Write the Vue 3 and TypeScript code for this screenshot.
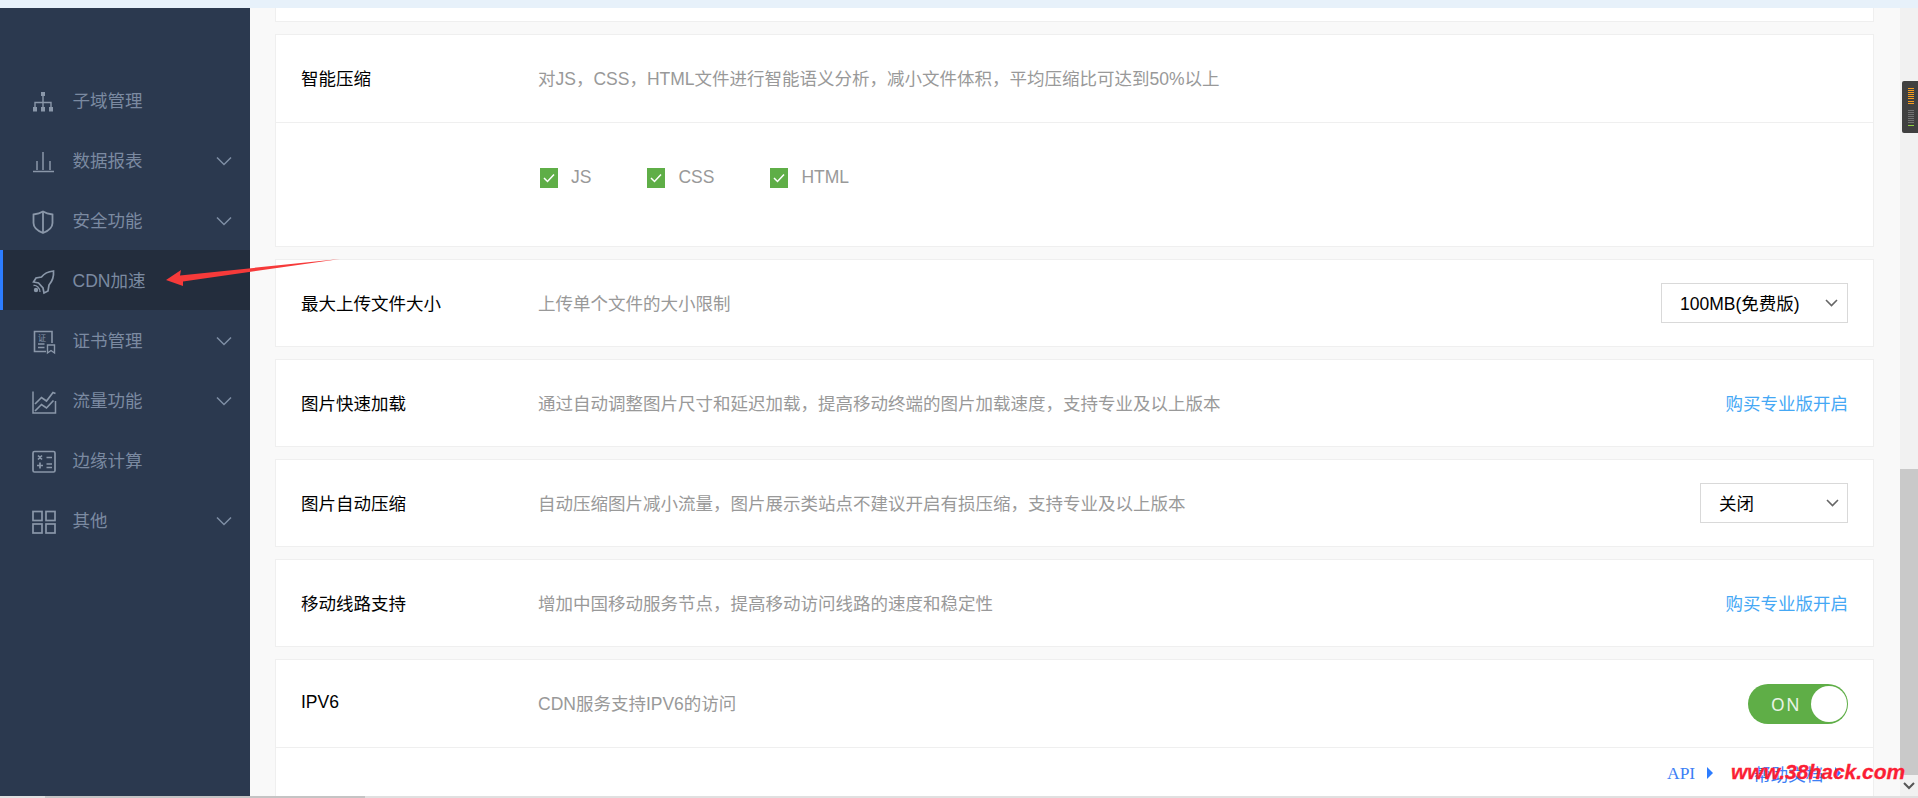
<script setup lang="ts">
interface NavItem { key: string; label: string; chevron: boolean; active?: boolean }
const nav: NavItem[] = [
  { key: 'sub', label: '子域管理', chevron: false },
  { key: 'report', label: '数据报表', chevron: true },
  { key: 'safe', label: '安全功能', chevron: true },
  { key: 'cdn', label: 'CDN加速', chevron: false, active: true },
  { key: 'cert', label: '证书管理', chevron: true },
  { key: 'flow', label: '流量功能', chevron: true },
  { key: 'edge', label: '边缘计算', chevron: false },
  { key: 'other', label: '其他', chevron: true },
]
const checks = ['JS', 'CSS', 'HTML']
const orange = Array.from({ length: 8 }, (_, i) => i)
const grey = Array.from({ length: 7 }, (_, i) => i)
</script>

<template>
  <div class="page">
    <div class="topbar"></div>
    <div class="body">
      <aside class="sidebar">
        <div v-for="item in nav" :key="item.key" class="nav" :class="{ active: item.active }">
          <span class="nav-icon">
            <svg width="24" height="24" viewBox="0 0 24 24" fill="none" stroke="#8a97a9" stroke-width="1.4">
              <template v-if="item.key === 'sub'">
                <path d="M11 5v6M3 17v-4.500h16V17M11 11v6" />
                <rect x="9" y="2" width="4" height="4" fill="#8a97a9" stroke="none" />
                <rect x="1" y="17" width="4" height="4.500" fill="#8a97a9" stroke="none" />
                <rect x="9" y="17" width="4" height="4.500" fill="#8a97a9" stroke="none" />
                <rect x="17" y="17" width="4" height="4.500" fill="#8a97a9" stroke="none" />
              </template>
              <template v-else-if="item.key === 'report'">
                <path d="M1 21.500h21M5 20V11M11 20V2M18 20V11" stroke-width="1.500" />
              </template>
              <template v-else-if="item.key === 'safe'">
                <path d="M1.500 4.500C5 4 8.500 3 11 1.500 13.500 3 17 4 20.500 4.500V13C20.500 18 16 21 11 23 6 21 1.500 18 1.500 13z" stroke-width="1.800" />
                <path d="M11 2v20.500" stroke-width="1.800" />
              </template>
              <template v-else-if="item.key === 'cdn'">
                <path d="M21.500 1c.5 6-1 10-4.500 14l-1 6-4 2-1-5-4.500-5-5-1 2.500-4 5.500-1C12.500 3 17 1.500 21.500 1z" stroke-width="1.700" />
                <circle cx="4" cy="20" r="2.200" fill="#8a97a9" stroke="none" />
                <path d="M1.500 15.500c3-.5 6.500 2.500 6.500 6.500" stroke-width="1.300" />
              </template>
              <template v-else-if="item.key === 'cert'">
                <path d="M20 13V1.500H2.500v20H14" stroke-width="1.600" />
                <text x="6" y="10.500" font-size="8" fill="#8a97a9" stroke="none" class="mini">证</text>
                <path d="M6 14h6.500M6 17.500h6.500" stroke-width="1.400" />
                <path d="M15.500 15h7v8l-3.500-2.500-3.500 2.500z" stroke-width="1.400" />
              </template>
              <template v-else-if="item.key === 'flow'">
                <path d="M1 1.500v21.500h22.500V11" stroke-width="1.500" />
                <path d="M3 14l6.500-6.500 5 3.500 6.500-8.500 2.500 1M3 21l6.500-6.500 5 3.500 7-7.500" stroke-width="1.700" />
              </template>
              <template v-else-if="item.key === 'edge'">
                <rect x="1" y="1.500" width="22" height="20.500" rx="1.500" stroke-width="1.700" />
                <path d="M6 5.500l4 4M10 5.500l-4 4M14.500 7.500h5.500M5 15.500h6M8 12.500v6M14.500 14h5.500M14.500 17.500h5.500" stroke-width="1.700" />
              </template>
              <template v-else>
                <rect x="1" y="1.500" width="9" height="9" stroke-width="1.700" />
                <rect x="14" y="1.500" width="9" height="9" stroke-width="1.700" />
                <rect x="1" y="14" width="9" height="9" stroke-width="1.700" />
                <rect x="14" y="14" width="9" height="9" stroke-width="1.700" />
              </template>
            </svg>
          </span>
          <span class="nav-label">{{ item.label }}</span>
          <svg v-if="item.chevron" class="nav-chev" width="16" height="10" viewBox="0 0 16 10" fill="none" stroke="#7f8ea5" stroke-width="1.500">
            <path d="M1 1.500l7 7 7-7" />
          </svg>
        </div>
      </aside>

      <main class="main">
        <section class="card stub"></section>

        <section class="card">
          <div class="row head">
            <div class="label">智能压缩</div>
            <div class="desc">对JS，CSS，HTML文件进行智能语义分析，减小文件体积，平均压缩比可达到50%以上</div>
          </div>
          <div class="row checks-row">
            <div class="checks">
              <label v-for="c in checks" :key="c" class="check">
                <span class="box">
                  <svg width="12" height="10" viewBox="0 0 12 10" fill="none" stroke="#fff" stroke-width="1.500"><path d="M1 5l3.500 3.500L11 1.500" /></svg>
                </span>
                <span>{{ c }}</span>
              </label>
            </div>
          </div>
        </section>

        <section class="card">
          <div class="row">
            <div class="label">最大上传文件大小</div>
            <div class="desc">上传单个文件的大小限制</div>
            <div class="select wide">
              <span>100MB(免费版)</span>
              <svg width="13" height="8" viewBox="0 0 13 8" fill="none" stroke="#666" stroke-width="1.600"><path d="M1 1l5.500 5.500L12 1" /></svg>
            </div>
          </div>
        </section>

        <section class="card">
          <div class="row">
            <div class="label">图片快速加载</div>
            <div class="desc">通过自动调整图片尺寸和延迟加载，提高移动终端的图片加载速度，支持专业及以上版本</div>
            <a class="link">购买专业版开启</a>
          </div>
        </section>

        <section class="card">
          <div class="row">
            <div class="label">图片自动压缩</div>
            <div class="desc">自动压缩图片减小流量，图片展示类站点不建议开启有损压缩，支持专业及以上版本</div>
            <div class="select narrow">
              <span>关闭</span>
              <svg width="13" height="8" viewBox="0 0 13 8" fill="none" stroke="#666" stroke-width="1.600"><path d="M1 1l5.500 5.500L12 1" /></svg>
            </div>
          </div>
        </section>

        <section class="card">
          <div class="row">
            <div class="label">移动线路支持</div>
            <div class="desc">增加中国移动服务节点，提高移动访问线路的速度和稳定性</div>
            <a class="link">购买专业版开启</a>
          </div>
        </section>

        <section class="card last">
          <div class="row head">
            <div class="label">IPV6</div>
            <div class="desc">CDN服务支持IPV6的访问</div>
            <div class="switch"><span class="on">ON</span><span class="knob"></span></div>
          </div>
          <div class="row empty"></div>
        </section>
      </main>

      <div class="scrollbar">
        <div class="track"></div>
        <div class="thumb"></div>
        <div class="down">
          <svg width="12" height="8" viewBox="0 0 12 8" fill="none" stroke="#555" stroke-width="2"><path d="M1 1l5 5 5-5" /></svg>
        </div>
      </div>
    </div>
    <div class="hbar"><div class="hthumb"></div></div>

    <svg class="arrow" width="200" height="40" viewBox="160 255 200 40">
      <polygon points="166,280 181,270 180,275.500 340,259 183,281.500 183,286" fill="#f63a3a" />
    </svg>

    <div class="float-links">
      <span class="fl api">API</span><i class="tri"></i>
      <span class="fl help">帮助文档</span><i class="tri"></i>
    </div>
    <div class="watermark">www.38hack.com</div>

    <div class="widget">
      <i v-for="n in orange" :key="'o' + n" class="bar o"></i>
      <i class="spacer"></i>
      <i v-for="n in grey" :key="'g' + n" class="bar g"></i>
      <i class="bar l"></i>
    </div>
  </div>
</template>

<style scoped>
.page {
  position: relative;
  width: 1918px;
  height: 798px;
  overflow: hidden;
  display: flex;
  flex-direction: column;
  background: #f9f9f9;
  font-family: "Liberation Sans", "Noto Sans CJK SC", sans-serif;
  font-size: 17.5px;
}
.topbar { height: 8px; background: #e7f1fa; flex: none; }
.body { display: flex; height: 788px; flex: none; }
.sidebar { width: 250px; flex: none; background: #2b394f; padding-top: 62px; box-sizing: border-box; }
.nav { position: relative; height: 60px; display: flex; align-items: center; padding-left: 32px; color: #7b8aa1; box-sizing: border-box; }
.nav.active { background: #232d3d; box-shadow: inset 3px 0 0 #2d7dff; }
.nav-icon { width: 24px; height: 24px; margin: 4px 16.5px 0 0; display: block; }
.nav-icon svg { display: block; overflow: visible; }
.nav-icon .mini { font-family: "Noto Sans CJK SC", sans-serif; }
.nav-label { flex: 1; padding-bottom: 2px; }
.nav-chev { margin: 2px 18px 0 0; }
.main { flex: 1; padding: 0 26px 0 25px; display: flex; flex-direction: column; gap: 12px; min-width: 0; }
.card { background: #fff; border: 1px solid #efefef; box-sizing: border-box; flex: none; }
.stub { height: 14px; border-top: 0; }
.row { height: 86px; display: flex; align-items: center; padding: 0 25px 0 25px; box-sizing: border-box; }
.row.head { height: 87px; }
.row + .row { border-top: 1px solid #efefef; }
.label { width: 237px; flex: none; color: #000; padding-bottom: 2px; }
.desc { flex: 1; color: #999; white-space: nowrap; padding-bottom: 2px; }
.checks-row { height: 124px; padding: 0 0 14px 264px; }
.checks { display: flex; }
.check { display: flex; align-items: center; color: #999; margin-right: 56px; }
.check .box { width: 18px; height: 20px; background: #5fae47; margin-right: 13px; display: flex; align-items: center; justify-content: center; }
.select { height: 40px; border: 1px solid #d9d9d9; box-sizing: border-box; display: flex; align-items: center; justify-content: space-between; color: #000; flex: none; }
.select span { padding-bottom: 2px; }
.select.wide { width: 187px; padding: 0 9px 0 18px; }
.select.narrow { width: 148px; padding: 0 8px 0 18px; }
.link { color: #45a8f5; flex: none; padding-bottom: 2px; }
.switch { width: 100px; height: 40px; border-radius: 20px; background: #5fae47; position: relative; flex: none; }
.switch .on { position: absolute; left: 23px; top: 9px; color: #e8f3e4; font-size: 17.500px; letter-spacing: 1.500px; line-height: 22px; font-family: "Noto Sans", sans-serif; }
.switch .knob { position: absolute; right: 1.500px; top: 2px; width: 36px; height: 36px; border-radius: 50%; background: #fff; }
.last { height: 200px; }
.empty { height: 100px; }
.scrollbar { width: 18px; flex: none; position: relative; display: flex; flex-direction: column; background: #f1f1f1; }
.track { height: 461px; flex: none; }
.thumb { height: 306px; flex: none; background: #c9c9c9; }
.down { height: 21px; flex: none; display: flex; align-items: center; justify-content: center; background: #f1f1f1; }
.hbar { height: 2px; background: #e0e0e0; flex: none; position: relative; }
.hthumb { margin-left: 45px; width: 320px; height: 2px; background: #c4c4c4; }
.arrow { position: absolute; left: 160px; top: 255px; }
.float-links { position: absolute; left: 1667px; top: 760px; display: flex; align-items: center; height: 26px; color: #3d80f5; }
.fl { font-family: "Liberation Serif", "Noto Sans CJK SC", serif; font-size: 17.500px; }
.tri { width: 0; height: 0; border-left: 6px solid #2d7dff; border-top: 6px solid transparent; border-bottom: 6px solid transparent; margin-left: 12px; }
.help { margin-left: 40px; }
.watermark { position: absolute; left: 1731px; top: 758px; color: #fb1f35; font-family: "Liberation Sans", sans-serif; font-weight: 700; font-style: italic; font-size: 21px; line-height: 28px; white-space: nowrap; -webkit-text-stroke: .3px #fb1f35; }
.widget { position: absolute; left: 1902px; top: 81px; width: 16px; height: 52px; background: #404040; border-radius: 2px 0 0 2px; padding: 7px 0 0 6px; box-sizing: border-box; display: flex; flex-direction: column; }
.bar { display: block; width: 6px; height: 1px; margin-bottom: 1.100px; flex: none; }
.bar.o { background: #f79d1e; }
.bar.g { background: #737373; }
.bar.l { background: #8fd13f; margin-top: 1px; }
.spacer { display: block; height: 5px; flex: none; }
</style>

<style>
html, body { margin: 0; overflow: hidden; }
</style>
